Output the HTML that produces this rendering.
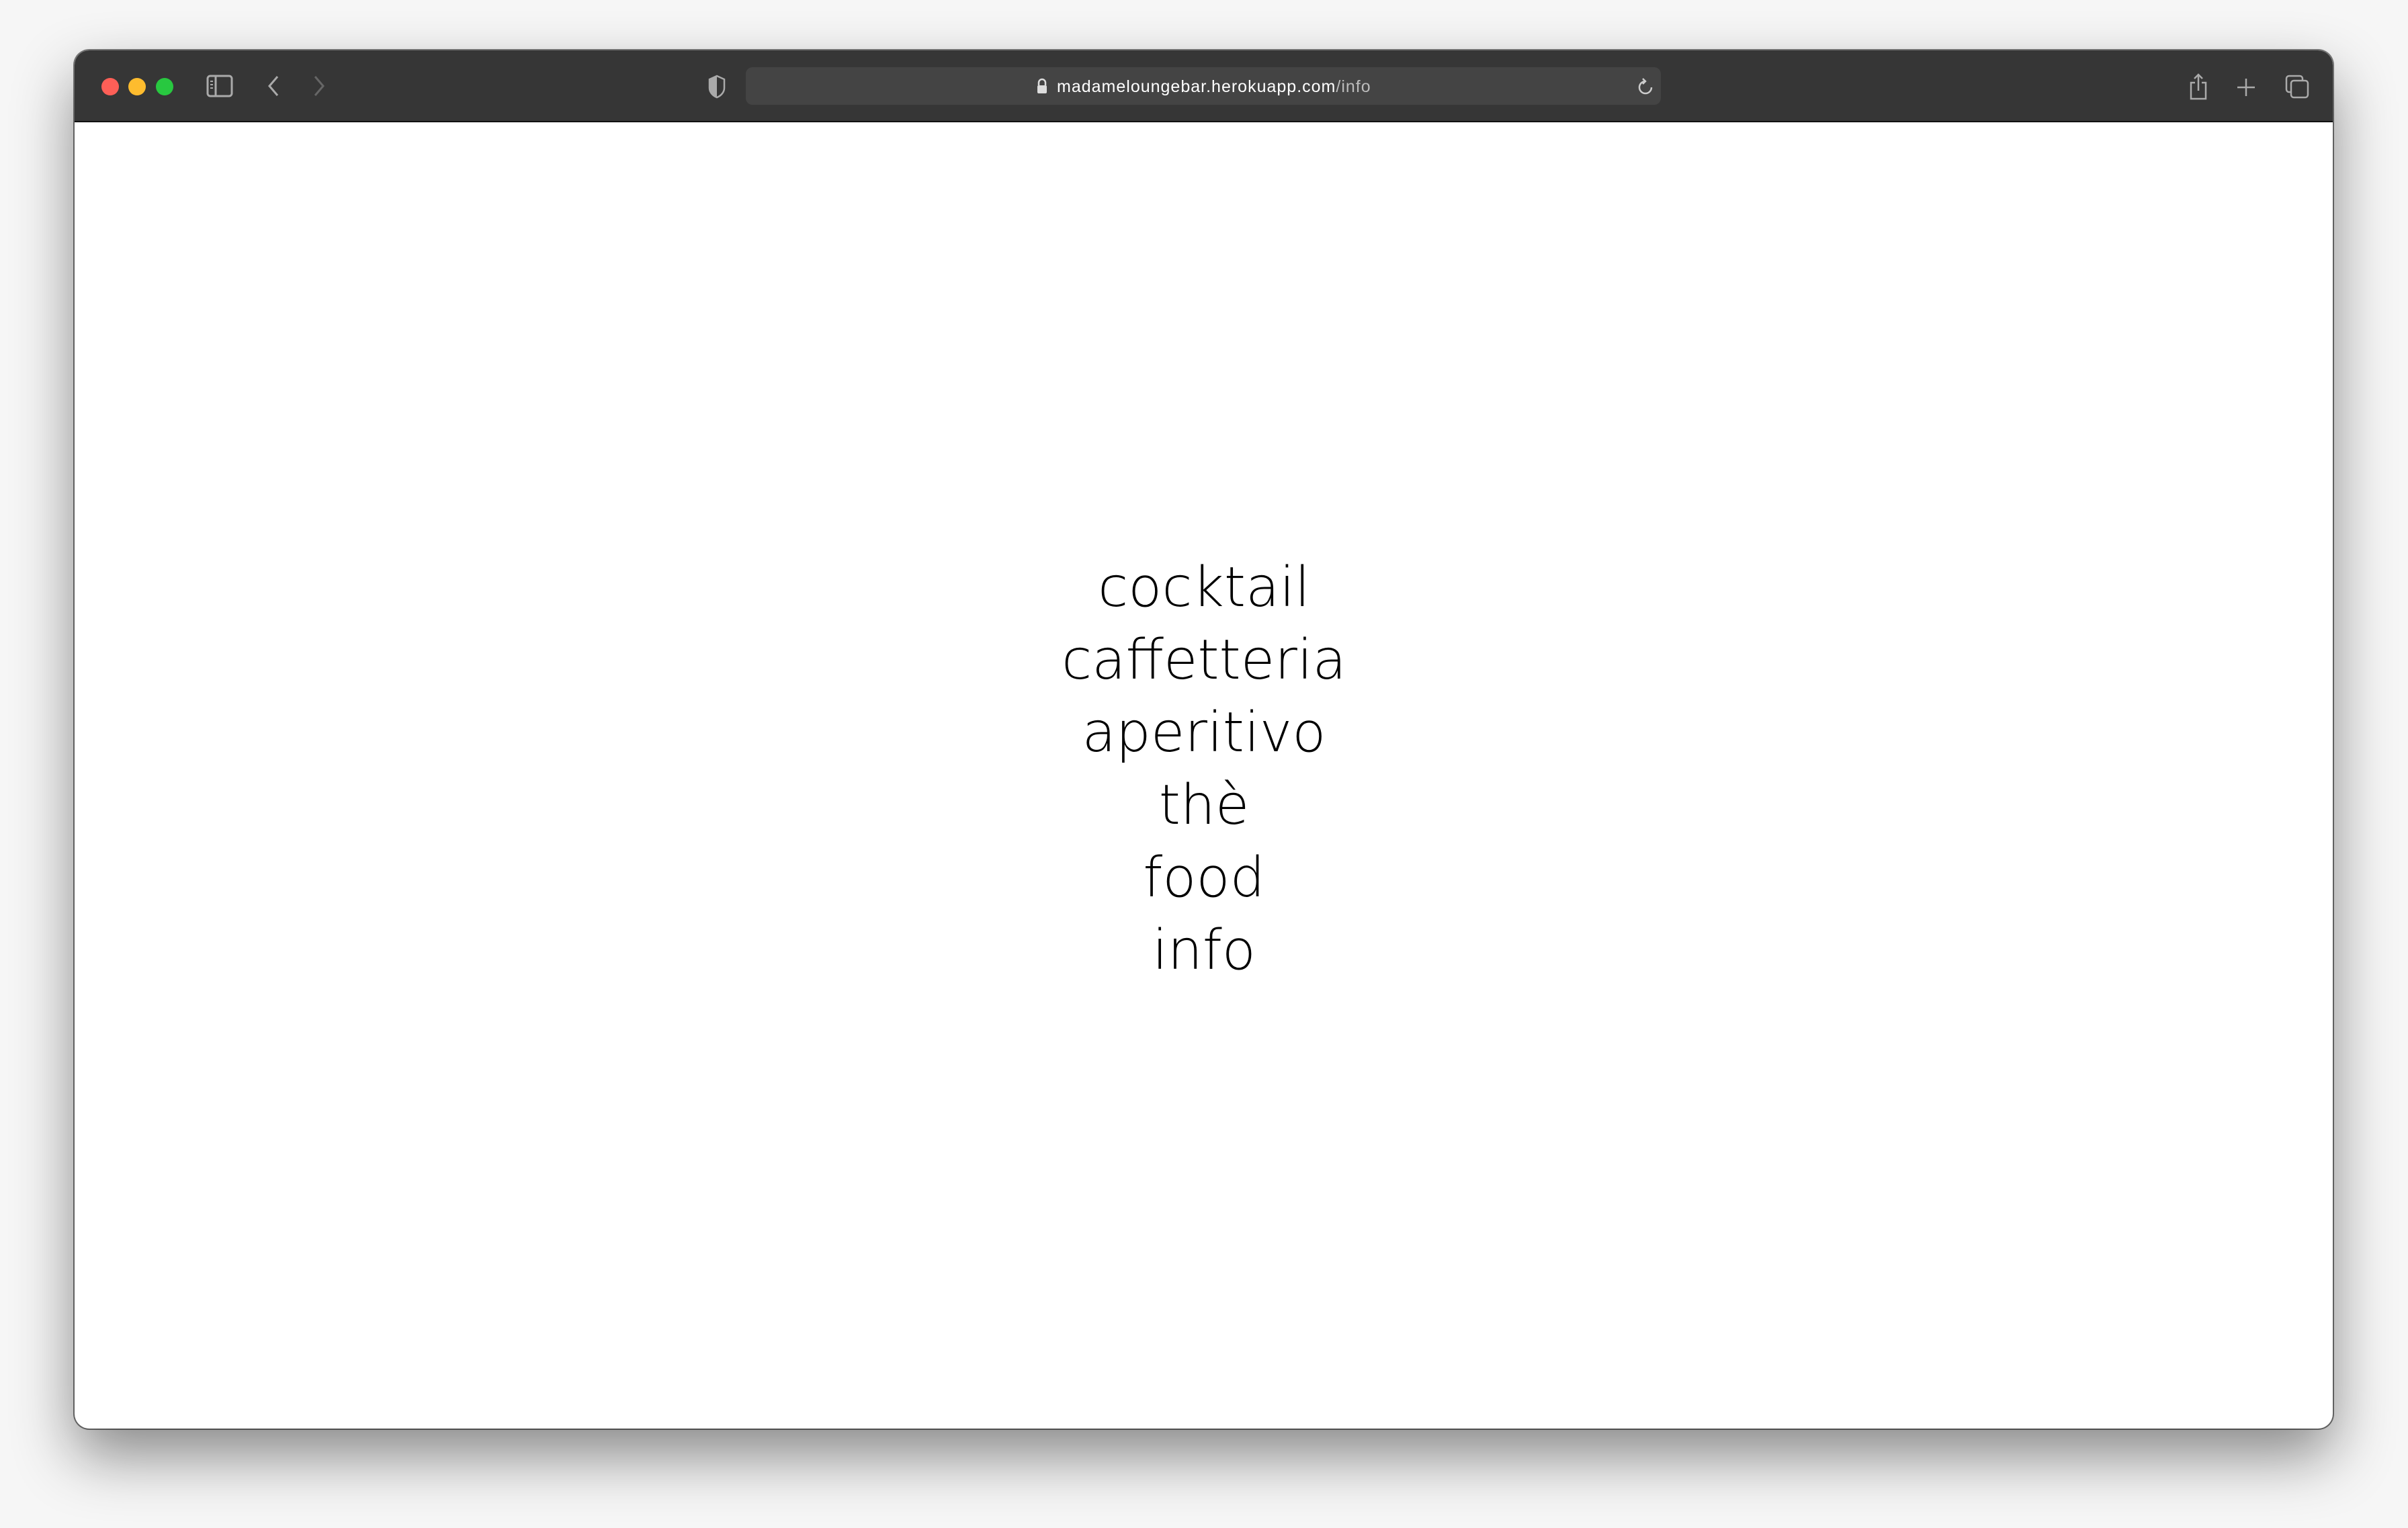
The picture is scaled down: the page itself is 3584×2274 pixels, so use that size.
<!DOCTYPE html>
<html><head><meta charset="utf-8"><style>
html,body{margin:0;padding:0;width:3584px;height:2274px;overflow:hidden;background:#f6f6f6;}
body{position:relative;font-family:"Liberation Sans",sans-serif;}
.win{position:absolute;left:111px;top:75px;width:3361px;height:2051px;border-radius:22px;overflow:hidden;background:#fff;
box-shadow:0 40px 90px rgba(0,0,0,0.45),0 0 0 2px rgba(0,0,0,0.5);}
.bar{position:absolute;left:0;top:0;width:100%;height:105px;background:#363636;border-bottom:2px solid #111;}
.dot{position:absolute;top:41px;width:26px;height:26px;border-radius:50%;}
.url{position:absolute;left:999px;top:25px;width:1362px;height:56px;border-radius:10px;background:#444;}
.urltext{position:absolute;left:1462px;top:40px;font-size:25px;color:#fff;white-space:nowrap;letter-spacing:1px;}
.urltext span{color:#bbb}
.menu{position:absolute;left:0;width:100%;top:821px;text-align:center;font-family:"DejaVu Sans",sans-serif;font-weight:200;font-size:82px;line-height:108px;color:#000;}
svg{position:absolute;}
</style></head><body>
<div class="win">
 <div class="bar">
  <div class="dot" style="left:40px;background:#fe5f57"></div>
  <div class="dot" style="left:80px;background:#febc2e"></div>
  <div class="dot" style="left:121px;background:#28c840"></div>
  <svg style="left:196px;top:36px" width="40" height="34" viewBox="0 0 40 34"><rect x="2" y="2" width="36" height="30" rx="4" fill="none" stroke="#aaa" stroke-width="3"/><line x1="14" y1="2" x2="14" y2="32" stroke="#aaa" stroke-width="3"/><line x1="6" y1="10" x2="10" y2="10" stroke="#aaa" stroke-width="2"/><line x1="6" y1="15" x2="10" y2="15" stroke="#aaa" stroke-width="2"/><line x1="6" y1="20" x2="10" y2="20" stroke="#aaa" stroke-width="2"/></svg>
  <svg style="left:284px;top:36px" width="24" height="34" viewBox="0 0 24 34"><polyline points="18,3 6,17 18,31" fill="none" stroke="#aaa" stroke-width="3"/></svg>
  <svg style="left:352px;top:36px" width="24" height="34" viewBox="0 0 24 34"><polyline points="6,3 18,17 6,31" fill="none" stroke="#666" stroke-width="3"/></svg>
  <svg style="left:942px;top:36px" width="28" height="36" viewBox="0 0 28 36"><path d="M14 2 L25 7 V20 C25 27 19 32 14 34 C9 32 3 27 3 20 V7 Z" fill="none" stroke="#aaa" stroke-width="2.5"/><path d="M14 2 L3 7 V20 C3 27 9 32 14 34 Z" fill="#aaa"/></svg>
  <div class="url"></div>
  <svg style="left:1432px;top:41px" width="16" height="24" viewBox="0 0 16 24"><path d="M3 11 V7 a5 5 0 0 1 10 0 V11" fill="none" stroke="#ddd" stroke-width="2.5"/><rect x="1" y="11" width="14" height="12" rx="2" fill="#ddd"/></svg>
  <div class="urltext">madameloungebar.herokuapp.com<span>/info</span></div>
  <svg style="left:2326px;top:40px" width="24" height="28" viewBox="0 0 24 28"><path d="M12 6 A9 9 0 1 0 21 15" fill="none" stroke="#ccc" stroke-width="2.5"/><polyline points="8,2 12,6 8,10" fill="none" stroke="#ccc" stroke-width="2.5"/></svg>
  <svg style="left:3145px;top:34px" width="32" height="40" viewBox="0 0 32 40"><path d="M11 14 H5 V38 H27 V14 H21" fill="none" stroke="#aaa" stroke-width="2.5"/><line x1="16" y1="2" x2="16" y2="26" stroke="#aaa" stroke-width="2.5"/><polyline points="10,8 16,2 22,8" fill="none" stroke="#aaa" stroke-width="2.5"/></svg>
  <svg style="left:3217px;top:40px" width="30" height="30" viewBox="0 0 30 30"><line x1="15" y1="2" x2="15" y2="28" stroke="#aaa" stroke-width="2.5"/><line x1="2" y1="15" x2="28" y2="15" stroke="#aaa" stroke-width="2.5"/></svg>
  <svg style="left:3290px;top:36px" width="36" height="36" viewBox="0 0 36 36"><rect x="2" y="2" width="24" height="24" rx="4" fill="none" stroke="#aaa" stroke-width="2.5"/><rect x="9" y="9" width="25" height="25" rx="4" fill="#363636" stroke="#aaa" stroke-width="2.5"/></svg>
 </div>
</div>
<div class="menu">cocktail<br>caffetteria<br>aperitivo<br>thè<br>food<br>info</div>
</body></html>
